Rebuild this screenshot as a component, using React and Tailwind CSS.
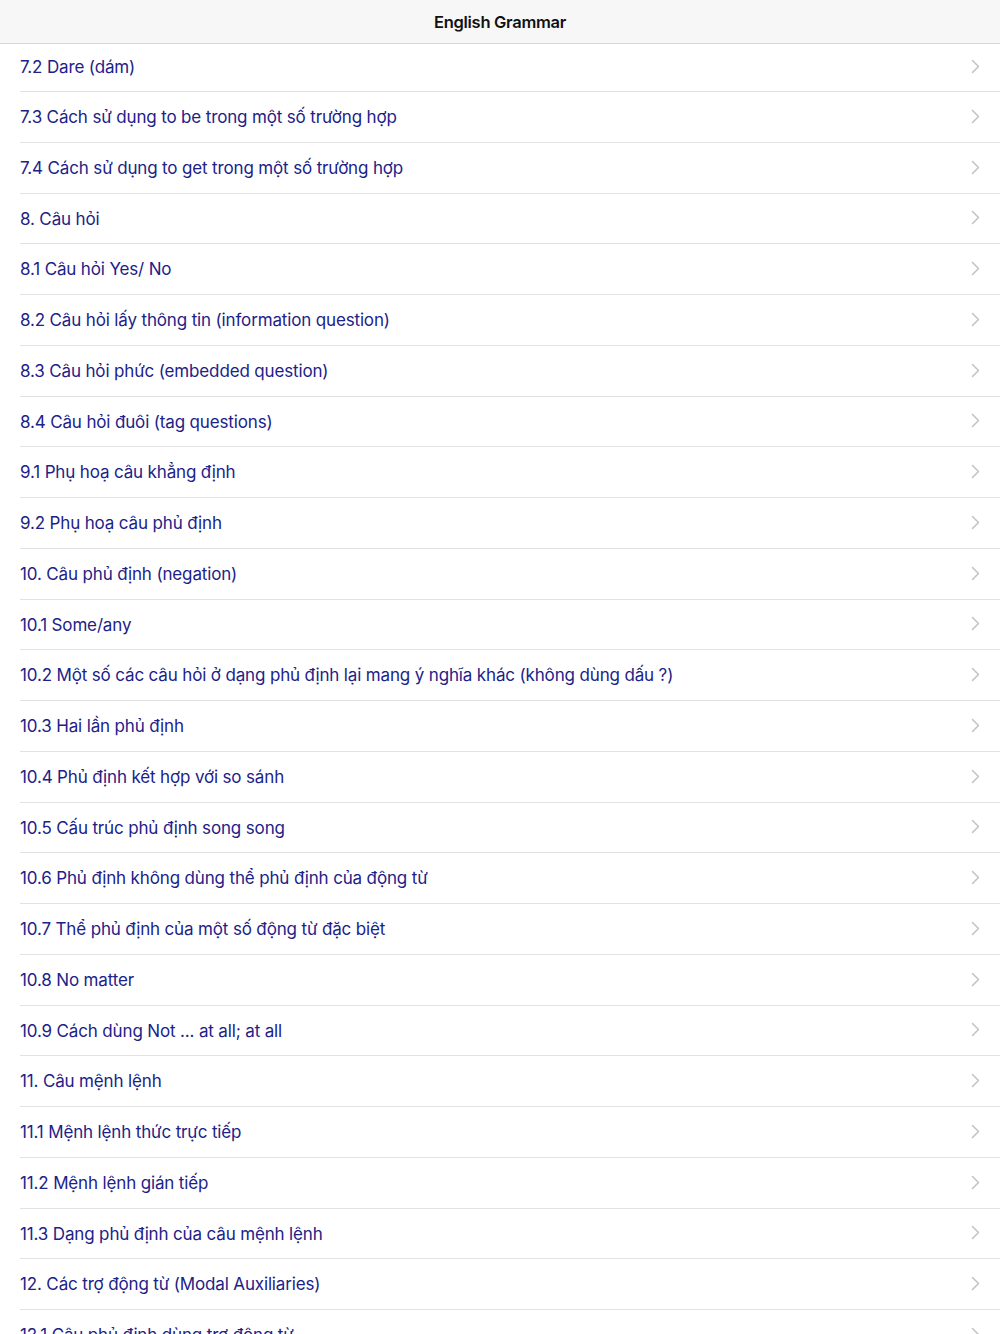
import React from "react";

const items = [
  "7.2 Dare (dám)",
  "7.3 Cách sử dụng to be trong một số trường hợp",
  "7.4 Cách sử dụng to get trong một số trường hợp",
  "8. Câu hỏi",
  "8.1 Câu hỏi Yes/ No",
  "8.2 Câu hỏi lấy thông tin (information question)",
  "8.3 Câu hỏi phức (embedded question)",
  "8.4 Câu hỏi đuôi (tag questions)",
  "9.1 Phụ hoạ câu khẳng định",
  "9.2 Phụ hoạ câu phủ định",
  "10. Câu phủ định (negation)",
  "10.1 Some/any",
  "10.2 Một số các câu hỏi ở dạng phủ định lại mang ý nghĩa khác (không dùng dấu ?)",
  "10.3 Hai lần phủ định",
  "10.4 Phủ định kết hợp với so sánh",
  "10.5 Cấu trúc phủ định song song",
  "10.6 Phủ định không dùng thể phủ định của động từ",
  "10.7 Thể phủ định của một số động từ đặc biệt",
  "10.8 No matter",
  "10.9 Cách dùng Not ... at all; at all",
  "11. Câu mệnh lệnh",
  "11.1 Mệnh lệnh thức trực tiếp",
  "11.2 Mệnh lệnh gián tiếp",
  "11.3 Dạng phủ định của câu mệnh lệnh",
  "12. Các trợ động từ (Modal Auxiliaries)",
  "12.1 Câu phủ định dùng trợ động từ",
];

function Chevron() {
  return (
    <svg width="9" height="15" viewBox="0 0 9 15" className="shrink-0 mb-[3px]">
      <path d="M1.5 1.5 L7.5 7.5 L1.5 13.5" fill="none" stroke="#c4c4c7" strokeWidth="1.6" strokeLinecap="round" strokeLinejoin="round" />
    </svg>
  );
}

export default function App() {
  return (
    <div className="w-[1000px] h-[1334px] overflow-hidden bg-white" style={{ fontFamily: "Inter, 'Noto Sans', sans-serif" }}>
      <div className="h-[44px] bg-[#f7f7f7] border-b border-[#d6d6d8] flex items-center justify-center pt-[2px]">
        <span className="text-[16.5px] font-semibold text-[#111] tracking-[-0.3px]">English Grammar</span>
      </div>
      <div>
        {items.map((t, i) => (
          <div key={i} className={`pl-[20px] ${i === 0 ? "h-[48px]" : "h-[50.75px]"}`}>
            <div className={`h-full flex items-center justify-between border-b border-[#e2e2e4] pr-[20px] ${i === 0 ? "pt-[1px]" : "pt-[2px]"}`}>
              <span className="text-[17px] text-[#1c2288] tracking-[-0.15px] whitespace-nowrap">{t}</span>
              <Chevron />
            </div>
          </div>
        ))}
      </div>
    </div>
  );
}
